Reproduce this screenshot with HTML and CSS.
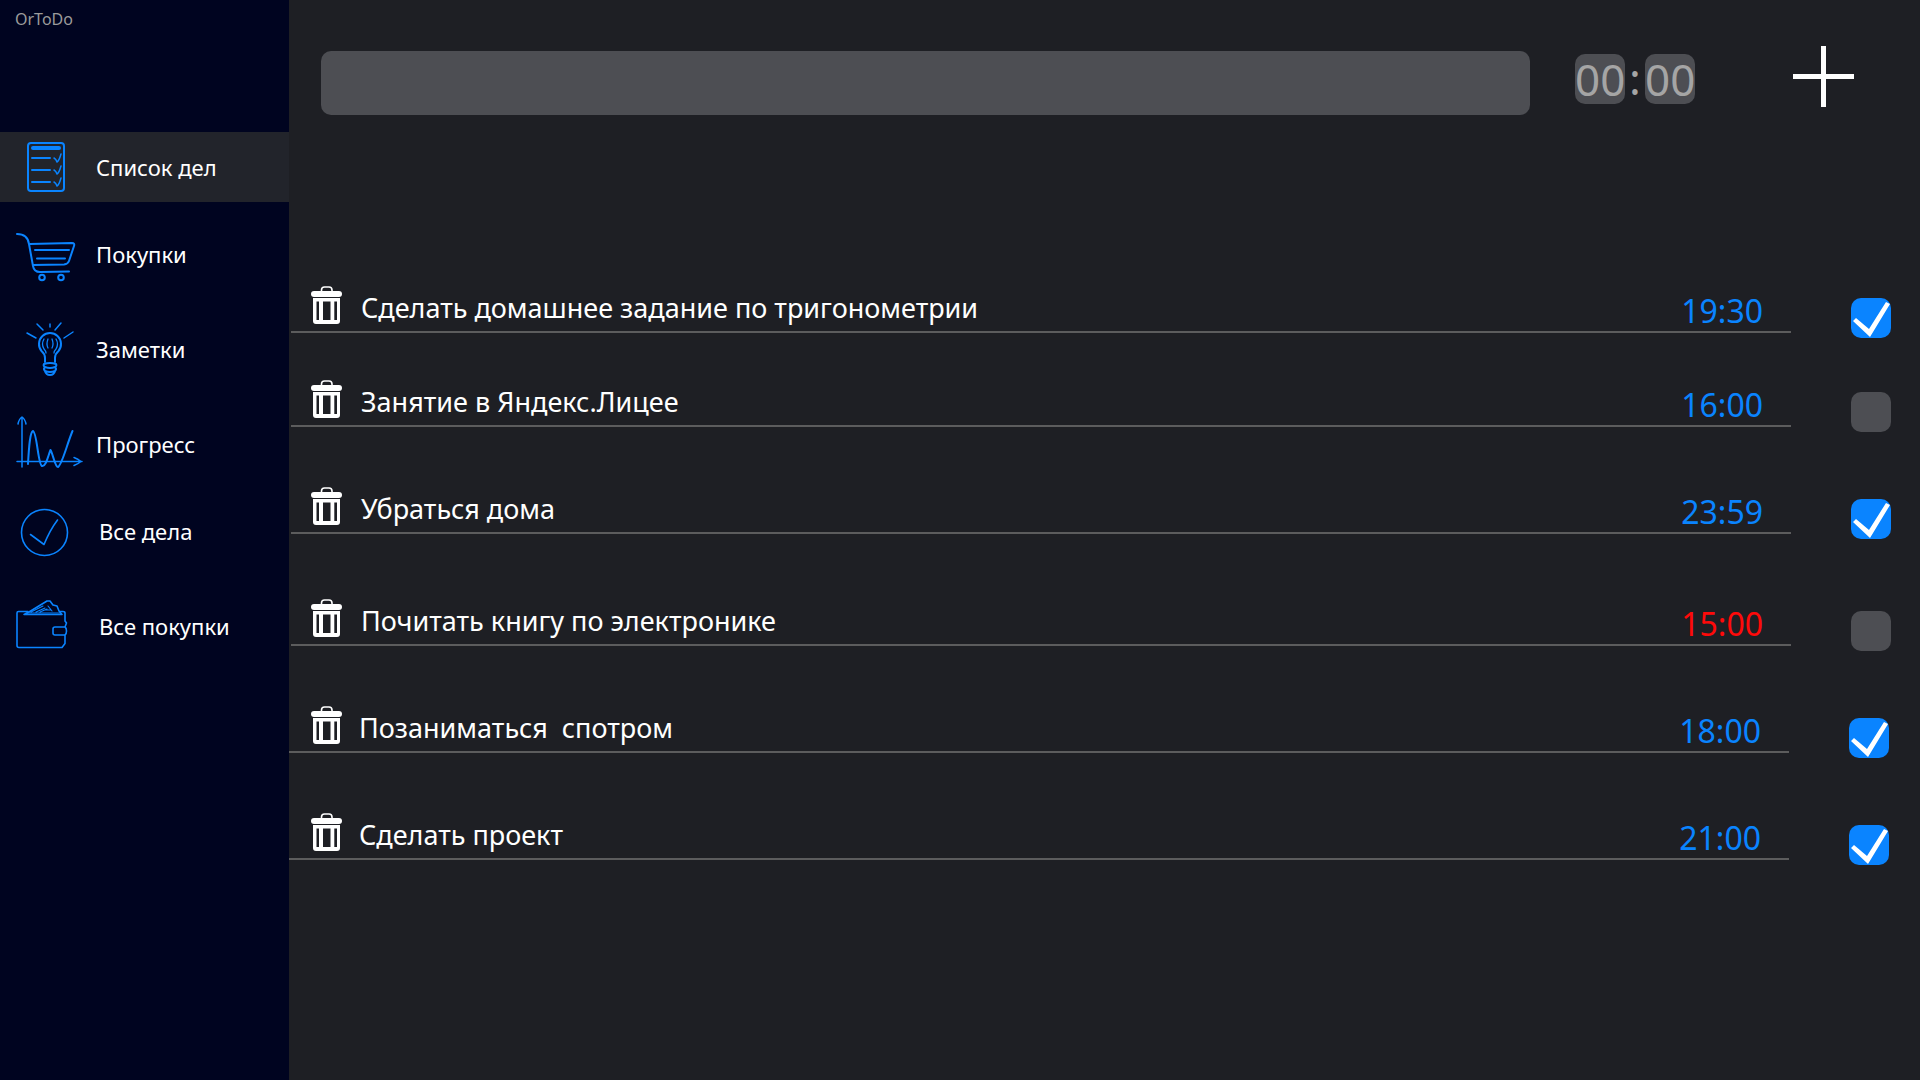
FILE: index.html
```html
<!DOCTYPE html>
<html lang="ru">
<head>
  <meta charset="utf-8">
  <meta name="viewport" content="width=device-width, initial-scale=1">
  <title>OrToDo</title>
  <link rel="stylesheet" href="styles.css">
</head>
<body>
  <svg class="sprite" aria-hidden="true">
    <symbol id="trash" viewBox="0 0 31 38">
      <path d="M10.500 6V4Q10.500 1 13.500 1H18Q21 1 21 4V6" fill="none" stroke="currentColor" stroke-width="1.600"/>
      <rect x="0" y="5" width="31" height="6" rx="3" fill="currentColor"/>
      <path fill="currentColor" fill-rule="evenodd" d="M2 12H29V35Q29 38 26 38H5Q2 38 2 35ZM5.500 15.500V34H8V15.500ZM12 15.500V34H19.500V15.500ZM23.300 15.500V34H26V15.500Z"/>
    </symbol>
  </svg>

  <div class="app">
    <aside class="sidebar">
      <h1 class="brand">OrToDo</h1>
      <nav class="nav" aria-label="Разделы">
        <a class="nav-link nav-link--active" href="#todo" aria-current="page">
          <svg class="nav-icon" viewBox="0 0 96 70" aria-hidden="true">
            <rect x="28" y="11" width="36" height="48" rx="3"/>
            <path stroke-width="4" d="M33 16H59"/>
            <path d="M32 26H50M32 38H50M32 50H50"/>
            <path stroke-width="1.500" d="M54 26Q56 27 57 30Q59 29 61 22M54 38Q56 39 57 42Q59 41 61 34M54 50Q56 51 57 54Q59 53 61 46"/>
          </svg>
          <span>Список дел</span>
        </a>
        <a class="nav-link nav-link--near" href="#shopping">
          <svg class="nav-icon" viewBox="0 0 96 70" aria-hidden="true">
            <path d="M17 15C24 15 28 18 29 25L33 47Q34 53 40 53L69 52.500"/>
            <path d="M30 25L72 24Q75 24 74 27L69 42Q68 45 64 45.500L33 46M35 31H69M37 39.500H65"/>
            <circle cx="42" cy="58.500" r="2.800"/>
            <circle cx="61" cy="58.500" r="2.800"/>
          </svg>
          <span>Покупки</span>
        </a>
        <a class="nav-link" href="#notes">
          <svg class="nav-icon" viewBox="0 0 96 70" aria-hidden="true">
            <path d="M45 48V44Q45 40 41.500 37A11 11 0 1 1 58.500 37Q55 40 55 44V48"/>
            <path d="M44 50Q50 48 56 50Q57 52 55 53Q57 55 55 57Q54 61 50 61Q46 61 45 57Q43 55 45 53Q43 52 44 50ZM45 53Q50 55 55 53M45 57Q50 59 55 57"/>
            <path stroke-width="1.300" d="M44 25Q41 30 44 35Q46 37 46 39M56 25Q59 30 56 35Q54 37 54 39M48 25Q46 30 48 34M52 25Q54 30 52 34"/>
            <path stroke-width="1.500" d="M27 19L36 24M37 10L43 16M50 10V13M61 9L55 16M73 18L64 24"/>
          </svg>
          <span>Заметки</span>
        </a>
        <a class="nav-link" href="#progress">
          <svg class="nav-icon" viewBox="0 0 96 70" aria-hidden="true">
            <path stroke-width="1.500" d="M22 58V8M18 15Q19 10 22 8Q25 10 26 15M17 52.500H82M74 48.500Q78 50 81 52.500Q78 55 74 56.500"/>
            <path d="M28 55C29 37 30 23 33 22C37 23 38 56 42 57C46 58 48 47 50.500 41C53 45 55 58 58 58C62 56 67 35 72.500 22"/>
          </svg>
          <span>Прогресс</span>
        </a>
        <a class="nav-link nav-link--near nav-link--archive" href="#all-todo">
          <svg class="nav-icon" viewBox="0 0 96 70" aria-hidden="true">
            <circle cx="44.500" cy="36.500" r="23" stroke-width="1.600"/>
            <path stroke-width="1.600" d="M30.500 38.500L44 48.500Q50 34 57.500 24"/>
          </svg>
          <span>Все дела</span>
        </a>
        <a class="nav-link nav-link--archive" href="#all-shopping">
          <svg class="nav-icon" viewBox="0 0 96 70" aria-hidden="true">
            <path stroke-width="1.600" d="M28 20.500H18.500Q17 20.500 17 22V54.500Q17 56.500 19 56.500H62L65 52.500V44H55Q53 44 53 42V38Q53 36 55 36H65L66.500 32L65 30V22Q65 20.500 63 20.500H60M65 36Q66.500 37 66.500 40Q66.500 43 65 44"/>
            <path stroke-width="1.600" d="M24 23.500H62L59 20L57 15L53 14L50 10H47L29 21Z"/>
            <path stroke-width="1.100" d="M31 21L43 15M36 21L45 17M40 21L47 18M45 19H51M48 15L52 20M26 22H60"/>
          </svg>
          <span>Все покупки</span>
        </a>
      </nav>
    </aside>

    <main class="main">
      <form class="composer">
        <input class="composer-text" type="text" aria-label="Новое дело">
        <div class="clock">
          <input class="clock-part" type="text" inputmode="numeric" maxlength="2" value="00" aria-label="Часы">
          <span class="clock-colon">:</span>
          <input class="clock-part" type="text" inputmode="numeric" maxlength="2" value="00" aria-label="Минуты">
        </div>
        <button class="add" type="button" aria-label="Добавить">
          <svg class="add-icon" viewBox="0 0 61 61" aria-hidden="true"><path d="M28 0H33V28H61V33H33V61H28V33H0V28H28Z" fill="currentColor"/></svg>
        </button>
      </form>

      <ul class="tasks">
        <li class="task">
          <div class="task-line">
            <button class="remove" type="button" aria-label="Удалить"><svg class="remove-icon" aria-hidden="true"><use href="#trash"/></svg></button>
            <label class="task-name" for="task-1">Сделать домашнее задание по тригонометрии</label>
            <time class="task-time">19:30</time>
          </div>
          <input class="check" type="checkbox" id="task-1" checked>
        </li>
        <li class="task task--near">
          <div class="task-line">
            <button class="remove" type="button" aria-label="Удалить"><svg class="remove-icon" aria-hidden="true"><use href="#trash"/></svg></button>
            <label class="task-name" for="task-2">Занятие в Яндекс.Лицее</label>
            <time class="task-time">16:00</time>
          </div>
          <input class="check" type="checkbox" id="task-2">
        </li>
        <li class="task">
          <div class="task-line">
            <button class="remove" type="button" aria-label="Удалить"><svg class="remove-icon" aria-hidden="true"><use href="#trash"/></svg></button>
            <label class="task-name" for="task-3">Убраться дома</label>
            <time class="task-time">23:59</time>
          </div>
          <input class="check" type="checkbox" id="task-3" checked>
        </li>
        <li class="task task--far">
          <div class="task-line">
            <button class="remove" type="button" aria-label="Удалить"><svg class="remove-icon" aria-hidden="true"><use href="#trash"/></svg></button>
            <label class="task-name" for="task-4">Почитать книгу по электронике</label>
            <time class="task-time task-time--overdue">15:00</time>
          </div>
          <input class="check" type="checkbox" id="task-4">
        </li>
        <li class="task task--flush">
          <div class="task-line">
            <button class="remove" type="button" aria-label="Удалить"><svg class="remove-icon" aria-hidden="true"><use href="#trash"/></svg></button>
            <label class="task-name" for="task-5">Позаниматься  спотром</label>
            <time class="task-time">18:00</time>
          </div>
          <input class="check" type="checkbox" id="task-5" checked>
        </li>
        <li class="task task--flush">
          <div class="task-line">
            <button class="remove" type="button" aria-label="Удалить"><svg class="remove-icon" aria-hidden="true"><use href="#trash"/></svg></button>
            <label class="task-name" for="task-6">Сделать проект</label>
            <time class="task-time">21:00</time>
          </div>
          <input class="check" type="checkbox" id="task-6" checked>
        </li>
      </ul>
    </main>
  </div>
</body>
</html>
```

FILE: styles.css
```css
:root {
  --bg: #1e1f24;
  --side: #000420;
  --active: #22242b;
  --field: #4d4e53;
  --rule: #5c5c5d;
  --muted: #a5a5a5;
  --blue: #0a84ff;
}

* {
  box-sizing: border-box;
}

body {
  margin: 0;
  background: var(--bg);
  color: #fff;
  font-family: "Noto Sans", "Open Sans", sans-serif;
}

button,
input {
  margin: 0;
  padding: 0;
  border: 0;
  background: none;
  color: inherit;
  font: inherit;
}

button {
  cursor: pointer;
}

.sprite {
  display: none;
}

.app {
  display: flex;
  min-height: 100vh;
}

/* Sidebar */

.sidebar {
  flex: 0 0 289px;
  background: var(--side);
}

.brand {
  height: 132px;
  margin: 0;
  padding: 7px 15px;
  color: #9b9b9b;
  font-size: 16px;
  font-weight: 400;
  line-height: 24px;
}

.nav {
  display: flex;
  flex-direction: column;
}

.nav-link {
  display: flex;
  align-items: center;
  height: 70px;
  margin-top: 25px;
  padding-bottom: 1px;
  color: #fff;
  font-size: 22px;
  line-height: 32px;
  text-decoration: none;
}

.nav-link--active {
  margin-top: 0;
  background: var(--active);
}

.nav-link--near {
  margin-top: 17px;
}

.nav-link--archive {
  gap: 3px;
}

.nav-icon {
  flex: none;
  width: 96px;
  height: 70px;
  fill: none;
  stroke: var(--blue);
  stroke-width: 2;
  stroke-linecap: round;
  stroke-linejoin: round;
}

/* Main column */

.main {
  flex: 1;
  min-width: 0;
}

.composer {
  display: flex;
  align-items: flex-start;
  padding: 46px 66px 0 32px;
}

.composer-text {
  flex: 1;
  min-width: 0;
  height: 64px;
  margin-top: 5px;
  padding: 0 20px;
  border-radius: 10px;
  background: var(--field);
  font-size: 27px;
}

.clock {
  display: flex;
  align-items: center;
  margin: 8px 98px 0 45px;
  color: var(--muted);
  font-size: 44px;
  line-height: 48px;
}

.clock-part {
  width: 50px;
  height: 50px;
  border-radius: 10px;
  background: var(--field);
  text-align: center;
}

.clock-colon {
  width: 20px;
  height: 50px;
  text-align: center;
}

.add {
  width: 61px;
  height: 61px;
}

.add-icon {
  display: block;
  width: 61px;
  height: 61px;
}

/* Task list */

.tasks {
  margin: 0;
  padding: 163px 0 0;
  list-style: none;
}

.task {
  display: flex;
  align-items: flex-end;
  gap: 60px;
  margin-top: 47px;
  padding: 0 29px 0 2px;
}

.task:first-child {
  margin-top: 0;
}

.task--near {
  margin-top: 34px;
}

.task--far {
  margin-top: 52px;
}

.task--flush {
  padding: 0 31px 0 0;
}

.task-line {
  display: flex;
  flex: 1;
  align-items: flex-end;
  height: 55px;
  min-width: 0;
  margin-bottom: 5px;
  padding: 0 28px 0 20px;
  border-bottom: 2px solid var(--rule);
}

.task--flush .task-line {
  padding-left: 22px;
}

.remove {
  width: 31px;
  height: 38px;
  margin: 0 19px 7px 0;
}

.task--flush .remove {
  margin-right: 17px;
}

.remove-icon {
  display: block;
  width: 31px;
  height: 38px;
}

.task-name {
  flex: 1;
  min-width: 0;
  padding-bottom: 5px;
  font-size: 27px;
  line-height: 36px;
  white-space: pre;
}

.task-time {
  padding-bottom: 2px;
  color: var(--blue);
  font-size: 32px;
  line-height: 36px;
}

.task-time--overdue {
  color: #ff0a0a;
}

.check {
  flex: none;
  width: 40px;
  height: 40px;
  border-radius: 10px;
  background: var(--field);
  appearance: none;
  cursor: pointer;
}

.check:checked {
  background: var(--blue);
}

.check:checked::before {
  display: block;
  width: 40px;
  height: 40px;
  background: #fff;
  clip-path: polygon(2px 23px, 5px 20px, 18px 31px, 35px 4px, 39px 6px, 19px 39px);
  content: "";
}
```
